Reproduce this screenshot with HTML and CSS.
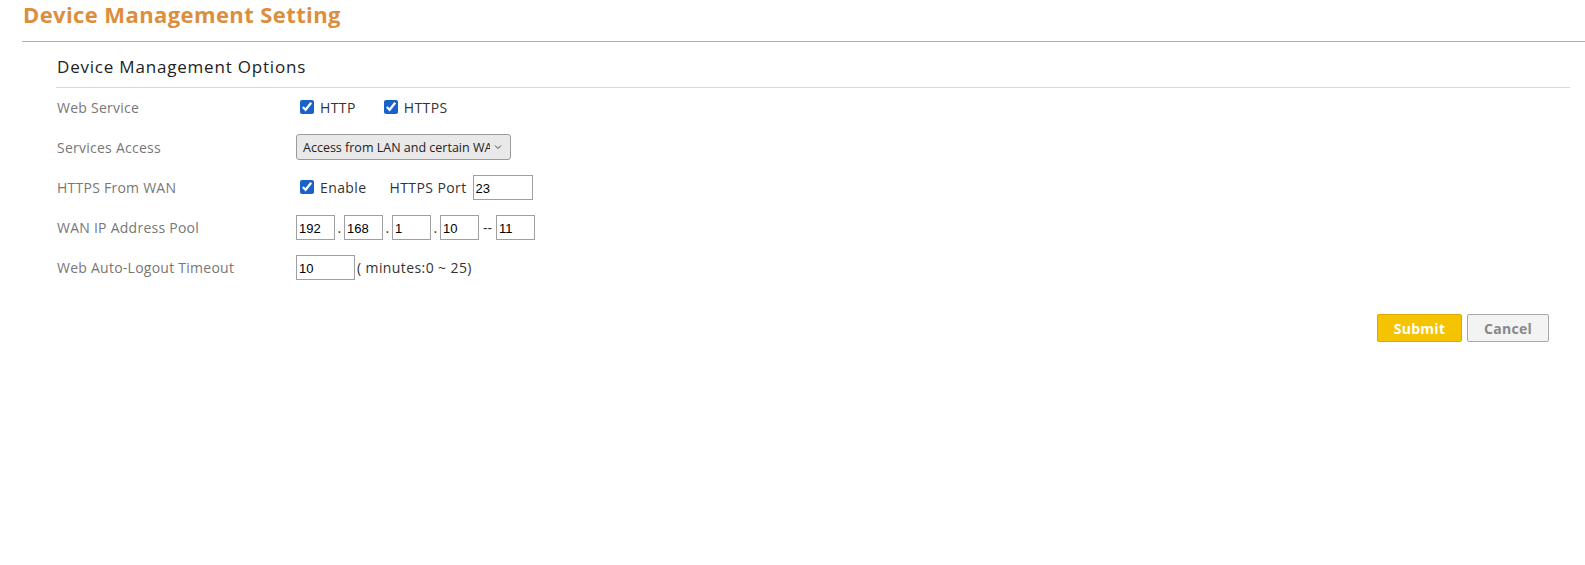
FILE: index.html
```html
<!DOCTYPE html>
<html lang="en">
<head>
<meta charset="UTF-8">
<title>Device Management Setting</title>
<link rel="stylesheet" href="styles.css">
</head>
<body>
<div class="page-head">
    <h1>Device Management Setting</h1>
</div>

<div class="section">
    <h2>Device Management Options</h2>

    <div class="row">
        <div class="label">Web Service</div>
        <div class="field">
            <label class="chk"><input type="checkbox" checked> HTTP</label>
            <label class="chk chk-gap"><input type="checkbox" checked> HTTPS</label>
        </div>
    </div>

    <div class="row">
        <div class="label">Services Access</div>
        <div class="field">
            <div class="select">
                <span class="select-text">Access from LAN and certain WAN</span>
                <svg class="caret" width="8" height="6" viewBox="0 0 8 6"><path d="M1 1.5 L4 4.5 L7 1.5" fill="none" stroke="#444" stroke-width="1"/></svg>
            </div>
        </div>
    </div>

    <div class="row">
        <div class="label">HTTPS From WAN</div>
        <div class="field">
            <label class="chk"><input type="checkbox" checked> Enable</label>
            <span class="port-label">HTTPS Port</span>
            <input type="text" class="box port" value="23">
        </div>
    </div>

    <div class="row">
        <div class="label">WAN IP Address Pool</div>
        <div class="field ip">
            <input type="text" class="box ip-box" value="192"><span class="dot">.</span>
            <input type="text" class="box ip-box" value="168"><span class="dot">.</span>
            <input type="text" class="box ip-box" value="1"><span class="dot">.</span>
            <input type="text" class="box ip-box" value="10"><span class="dash">--</span>
            <input type="text" class="box ip-box" value="11">
        </div>
    </div>

    <div class="row">
        <div class="label">Web Auto-Logout Timeout</div>
        <div class="field">
            <input type="text" class="box timeout" value="10">
            <span class="hint">( minutes:0 ~ 25)</span>
        </div>
    </div>

    <div class="actions">
        <button type="button" class="btn btn-submit">Submit</button>
        <button type="button" class="btn btn-cancel">Cancel</button>
    </div>
</div>
</body>
</html>
```

FILE: styles.css
```css
body {
  margin: 0;
  font-family: 'Open Sans', 'DejaVu Sans', sans-serif;
  color: #333;
  background: #fff;
}
.page-head {
  margin-left: 22px;
  border-bottom: 1px solid #d1a46c;
  height: 42px;
  box-sizing: border-box;
}
h1 {
  margin: 0;
  padding: 0 0 0 1px;
  font-size: 22px;
  font-weight: 700;
  letter-spacing: 0.4px;
  color: #dd8e3c;
  line-height: 28px;
}
.section {
  margin: 0 15px 0 56px;
}
h2 {
  margin: 0;
  padding: 13px 0 0 1px;
  height: 32px;
  font-size: 17px;
  font-weight: 500;
  letter-spacing: 0.8px;
  color: #222;
  line-height: 24px;
  border-bottom: 1px solid #d9d9d9;
}
.row {
  display: flex;
  align-items: center;
  height: 40px;
  margin-top: -1px;
  margin-bottom: 1px;
}
.label {
  width: 240px;
  padding-left: 1px;
  box-sizing: border-box;
  font-size: 14px;
  letter-spacing: 0.25px;
  color: #777;
}
.field {
  display: flex;
  align-items: center;
  font-size: 14px;
  letter-spacing: 0.4px;
  color: #333;
}
.chk {
  display: flex;
  align-items: center;
  gap: 6px;
  margin-left: 4px;
}
.chk input {
  margin: 0;
  width: 14px;
  height: 14px;
  accent-color: #1a62c7;
}
.chk-gap {
  margin-left: 28px;
}
.select {
  display: flex;
  align-items: center;
  width: 215px;
  height: 26px;
  box-sizing: border-box;
  border: 1px solid #9a9a9a;
  border-radius: 3px;
  background: #e9e9e9;
  padding: 0 5px 0 6px;
  font-size: 12.5px;
  letter-spacing: 0;
  color: #222;
  overflow: hidden;
}
.select-text {
  white-space: nowrap;
  overflow: hidden;
  width: 187px;
}
.caret {
  margin-left: 4px;
}
.port-label {
  margin-left: 23px;
  margin-right: 6px;
}
.box {
  height: 25px;
  box-sizing: border-box;
  border: 1px solid #a0a0a0;
  padding: 2px 2px 0;
  font-family: 'Liberation Sans', Arial, sans-serif;
  font-size: 13px;
  letter-spacing: 0;
  color: #000;
  margin: 0;
}
.port {
  width: 60px;
}
.ip-box {
  width: 39px;
}
.dot {
  width: 9px;
  text-align: center;
}
.dash {
  width: 17px;
  text-align: center;
  letter-spacing: 0;
}
.timeout {
  width: 59px;
}
.hint {
  margin-left: 2px;
}
.actions {
  display: flex;
  justify-content: flex-end;
  gap: 5px;
  margin-top: 27px;
  margin-right: 21px;
}
.btn {
  height: 28px;
  box-sizing: border-box;
  font-family: 'Open Sans', sans-serif;
  font-size: 14px;
  font-weight: 700;
  letter-spacing: 0.3px;
  border-radius: 2px;
  cursor: pointer;
}
.btn-submit {
  width: 85px;
  background: #f6c300;
  border: 1px solid #dca900;
  color: #fff;
}
.btn-cancel {
  width: 82px;
  background: #f3f3f3;
  border: 1px solid #a9a9a9;
  color: #888;
}
```
